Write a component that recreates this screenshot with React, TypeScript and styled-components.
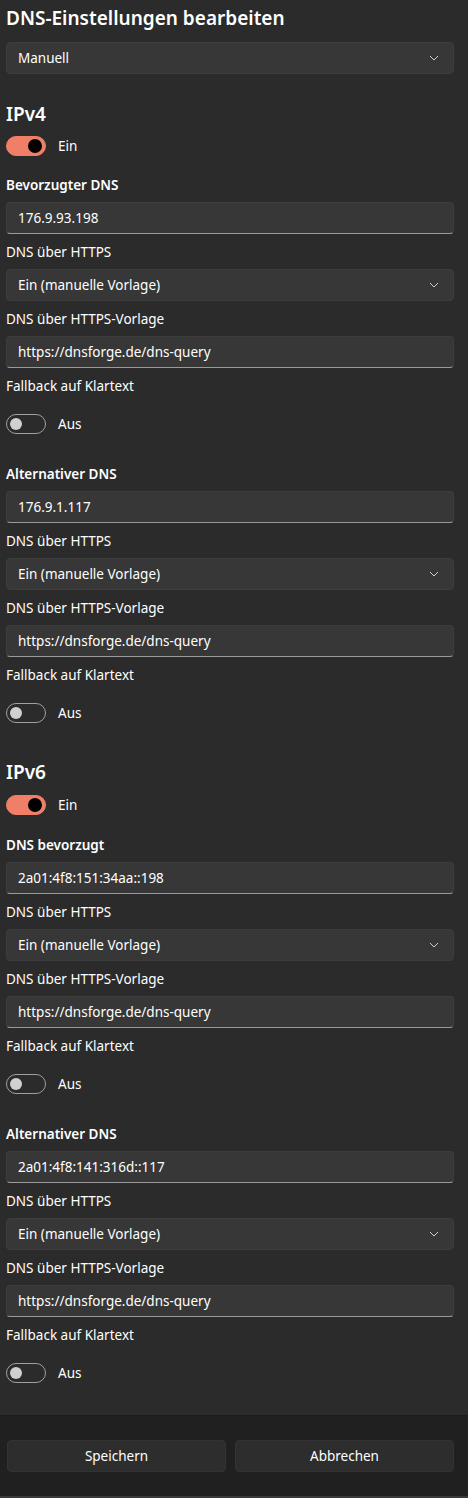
import styled, { createGlobalStyle } from 'styled-components'

const GlobalStyle = createGlobalStyle`
  html, body {
    margin: 0;
    padding: 0;
    background: #2b2b2b;
  }

  body {
    font-family: 'Noto Sans', 'Open Sans', sans-serif;
    color: #ffffff;
    -webkit-font-smoothing: antialiased;
  }
`

const Dialog = styled.div`
  width: 468px;
  min-height: 1498px;
  display: flex;
  flex-direction: column;
  background: #2b2b2b;
`

const Content = styled.div`
  flex: 1;
  padding: 4px 14px 32px 6px;
  display: flex;
  flex-direction: column;
`

const Title = styled.h1`
  margin: 0;
  font-size: 19px;
  line-height: 28px;
  font-weight: 600;
`

const SectionHeading = styled.h2<{ $first?: boolean }>`
  margin: ${(p) => (p.$first ? '26px' : '35px')} 0 0;
  font-size: 19px;
  line-height: 28px;
  font-weight: 600;
`

const Field = styled.div`
  height: 32px;
  box-sizing: border-box;
  border-radius: 4px;
  background: #373737;
  border: 1px solid #3d3d3d;
  display: flex;
  align-items: center;
  padding: 0 11px;
  font-size: 13.5px;
  color: #ffffff;
`

const SelectBox = styled(Field)<{ $top?: number }>`
  margin-top: ${(p) => p.$top ?? 0}px;
  justify-content: space-between;
  padding-right: 14px;
`

const TextBox = styled(Field)`
  border-bottom: 1px solid #9a9a9a;
`

const Label = styled.div<{ $strong?: boolean; $top?: number }>`
  margin-top: ${(p) => p.$top ?? 8}px;
  margin-bottom: 7px;
  font-size: 13.5px;
  line-height: 20px;
  font-weight: ${(p) => (p.$strong ? 600 : 400)};
`

const ToggleRow = styled.div<{ $top: number }>`
  margin-top: ${(p) => p.$top}px;
  height: 20px;
  display: flex;
  align-items: center;
  gap: 12px;
  font-size: 13.5px;
`

const Track = styled.span<{ $on: boolean }>`
  width: 40px;
  height: 20px;
  box-sizing: border-box;
  border-radius: 10px;
  display: flex;
  align-items: center;
  padding: 0 4px;
  justify-content: ${(p) => (p.$on ? 'flex-end' : 'flex-start')};
  background: ${(p) => (p.$on ? '#ef8067' : 'transparent')};
  border: 1px solid ${(p) => (p.$on ? '#ef8067' : '#a0a0a0')};
`

const Thumb = styled.span<{ $on: boolean }>`
  width: ${(p) => (p.$on ? 14 : 12)}px;
  height: ${(p) => (p.$on ? 14 : 12)}px;
  border-radius: 50%;
  background: ${(p) => (p.$on ? '#000000' : '#d0d0d0')};
  margin: ${(p) => (p.$on ? '0 -1px 0 0' : '0 0 0 -1px')};
`

const Footer = styled.div`
  background: #202020;
  border-top: 1px solid #1c1c1c;
  border-bottom: 2px solid #3a3a3a;
  padding: 24px 14px 24px 7px;
  display: grid;
  grid-template-columns: 1fr 1fr;
  gap: 9px;
`

const Button = styled.button`
  height: 32px;
  border-radius: 4px;
  background: #2d2d2d;
  border: 1px solid #333333;
  color: #ffffff;
  font-family: inherit;
  font-size: 13.5px;
`

const Chevron = () => (
  <svg width="10" height="6" viewBox="0 0 10 6" fill="none">
    <path d="M1 1l4 4 4-4" stroke="#cfcfcf" strokeWidth="1" />
  </svg>
)

const Toggle = ({ on, top }: { on: boolean; top: number }) => (
  <ToggleRow $top={top}>
    <Track $on={on}>
      <Thumb $on={on} />
    </Track>
    {on ? 'Ein' : 'Aus'}
  </ToggleRow>
)

type ServerProps = {
  title: string
  address: string
  top: number
}

const Server = ({ title, address, top }: ServerProps) => (
  <>
    <Label $strong $top={top}>
      {title}
    </Label>
    <TextBox>{address}</TextBox>
    <Label>DNS über HTTPS</Label>
    <SelectBox>
      Ein (manuelle Vorlage)
      <Chevron />
    </SelectBox>
    <Label>DNS über HTTPS-Vorlage</Label>
    <TextBox>https://dnsforge.de/dns-query</TextBox>
    <Label>Fallback auf Klartext</Label>
    <Toggle on={false} top={11} />
  </>
)

const App = () => {
  return (
    <Dialog>
      <GlobalStyle />
      <Content>
        <Title>DNS-Einstellungen bearbeiten</Title>
        <SelectBox $top={10}>
          Manuell
          <Chevron />
        </SelectBox>

        <SectionHeading $first>IPv4</SectionHeading>
        <Toggle on top={8} />
        <Server title="Bevorzugter DNS" address="176.9.93.198" top={19} />
        <Server title="Alternativer DNS" address="176.9.1.117" top={30} />

        <SectionHeading>IPv6</SectionHeading>
        <Toggle on top={9} />
        <Server title="DNS bevorzugt" address="2a01:4f8:151:34aa::198" top={20} />
        <Server title="Alternativer DNS" address="2a01:4f8:141:316d::117" top={30} />
      </Content>
      <Footer>
        <Button>Speichern</Button>
        <Button>Abbrechen</Button>
      </Footer>
    </Dialog>
  )
}

export default App
